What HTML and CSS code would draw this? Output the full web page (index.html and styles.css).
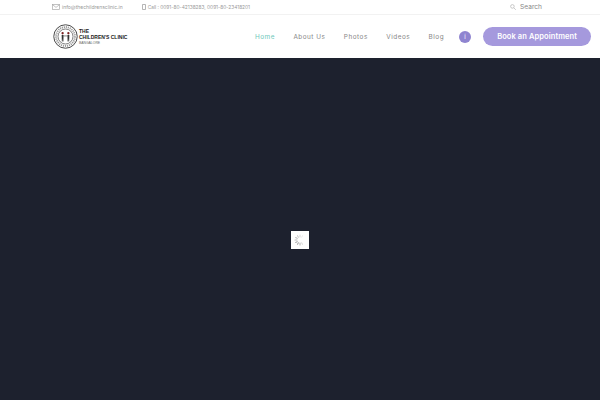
FILE: index.html
```html
<!DOCTYPE html>
<html lang="en">
<head>
    <meta charset="UTF-8">
    <title>The Children's Clinic</title>
    <link rel="stylesheet" href="styles.css">
</head>
<body>
    <div class="topbar">
        <div class="contact">
            <span class="item">
                <svg width="8" height="6" viewBox="0 0 8 6" fill="none" stroke="#aaa" stroke-width="0.7"><rect x="0.4" y="0.4" width="7.2" height="5.2"/><path d="M0.4 0.6 4 3.4 7.6 0.6"/></svg>
                info@thechildrensclinic.in
            </span>
            <span class="item phone">
                <svg width="4" height="6" viewBox="0 0 4 6" fill="none" stroke="#999" stroke-width="0.8"><rect x="0.4" y="0.4" width="3.2" height="5.2" rx="0.5"/></svg>
                Call : 0091-80-42138283, 0091-80-23418201
            </span>
        </div>
        <div class="search">
            <svg width="6" height="6" viewBox="0 0 6 6" fill="none" stroke="#bbb" stroke-width="0.8"><circle cx="2.4" cy="2.4" r="1.8"/><path d="M3.8 3.8 5.8 5.8"/></svg>
            Search
        </div>
    </div>
    <header class="navbar">
        <div class="logo">
            <svg width="25" height="25" viewBox="0 0 26 26">
                <circle cx="13" cy="13" r="12.2" fill="#fff" stroke="#444" stroke-width="1"/>
                <circle cx="13" cy="13" r="9.8" fill="none" stroke="#999" stroke-width="2" stroke-dasharray="1.2 0.9"/>
                <circle cx="13" cy="13" r="7.8" fill="#fff" stroke="#444" stroke-width="0.7"/>
                <circle cx="10" cy="9.6" r="1.2" fill="#7a2020"/>
                <circle cx="16" cy="9.6" r="1.2" fill="#7a2020"/>
                <path d="M9 11.4h2l-.2 6.8h-.6l-.2-3-.2 3h-.6zM15 11.4h2l-.2 6.8h-.6l-.2-3-.2 3h-.6z" fill="#333"/>
                <path d="M11 12.4h4" stroke="#333" stroke-width="0.6"/>
            </svg>
            <div class="logo-text">
                <span>THE</span>
                <span>CHILDREN'S CLINIC</span>
                <small>BANGALORE</small>
            </div>
        </div>
        <nav class="menu">
            <a class="active" href="#">Home</a>
            <a href="#">About Us</a>
            <a href="#">Photos</a>
            <a href="#">Videos</a>
            <a href="#">Blog</a>
        </nav>
        <span class="info-dot">i</span>
        <a class="book" href="#">Book an Appointment</a>
    </header>
    <main class="hero">
        <div class="loader">
            <svg width="12" height="12" viewBox="0 0 12 12" fill="none" stroke-width="1.1" stroke-linecap="round">
                <path d="M6 1v2" stroke="#ddd"/>
                <path d="M8.5 1.7 7.6 3.2" stroke="#eee"/>
                <path d="M3.5 1.7 4.4 3.2" stroke="#ccc"/>
                <path d="M1.7 3.5 3.2 4.4" stroke="#bbb"/>
                <path d="M1 6h2" stroke="#bbb"/>
                <path d="M1.7 8.5 3.2 7.6" stroke="#aaa"/>
                <path d="M3.5 10.3 4.4 8.8" stroke="#aaa"/>
                <path d="M6 11V9" stroke="#bbb"/>
                <path d="M8.5 10.3 7.6 8.8" stroke="#ddd"/>
            </svg>
        </div>
    </main>
</body>
</html>
```

FILE: styles.css
```css
* {
    box-sizing: border-box;
}

body {
    margin: 0;
    height: 400px;
    overflow: hidden;
    display: flex;
    flex-direction: column;
    background: #1d212e;
    font-family: "Inter", "Liberation Sans", sans-serif;
}

.topbar {
    height: 15px;
    background: #fff;
    border-bottom: 1px solid #f2f2f2;
    display: flex;
    align-items: center;
    justify-content: space-between;
    padding: 0 58px 0 52px;
    font-size: 5px;
    color: #999;
    white-space: nowrap;
}

.contact {
    display: flex;
    gap: 19px;
}

.item {
    display: flex;
    align-items: center;
    gap: 2px;
}

.phone {
    gap: 2px;
    font-size: 4.8px;
}

.search {
    display: flex;
    align-items: center;
    gap: 4px;
    font-size: 6.6px;
    color: #888;
}

.navbar {
    height: 43px;
    background: #fff;
    display: flex;
    align-items: center;
    padding: 0 10px 0 53px;
    white-space: nowrap;
}

.logo {
    display: flex;
    align-items: center;
    flex-shrink: 0;
    width: 202px;
}

.logo-text {
    display: flex;
    flex-direction: column;
    margin-left: 1px;
    font-family: "Liberation Sans", sans-serif;
    font-weight: 700;
    font-size: 5px;
    line-height: 6px;
    color: #222;
}

.logo-text small {
    font-size: 3.4px;
    font-weight: 400;
    line-height: 6px;
    color: #666;
}

.menu {
    display: flex;
    flex-shrink: 0;
    gap: 18.5px;
    font-size: 6.4px;
    letter-spacing: 0.5px;
}

.menu a {
    color: #888;
    text-decoration: none;
}

.menu a.active {
    color: #6fc8bb;
}

.info-dot {
    flex-shrink: 0;
    width: 12px;
    height: 12px;
    margin-left: 15px;
    border-radius: 50%;
    background: #8f84d0;
    color: #fff;
    font-size: 6px;
    text-align: center;
    line-height: 12px;
}

.book {
    flex-shrink: 0;
    width: 108px;
    height: 19px;
    margin-left: 12px;
    border-radius: 10px;
    background: #a599dd;
    color: #fff;
    font-size: 7.5px;
    font-weight: 600;
    letter-spacing: 0.1px;
    text-align: center;
    line-height: 19px;
    text-decoration: none;
}

.hero {
    flex: 1;
    display: flex;
    align-items: center;
    justify-content: center;
    background: #1d212e;
    padding-top: 21px;
}

.loader {
    width: 18px;
    height: 18px;
    background: #fff;
    display: flex;
    align-items: center;
    justify-content: center;
}
```
